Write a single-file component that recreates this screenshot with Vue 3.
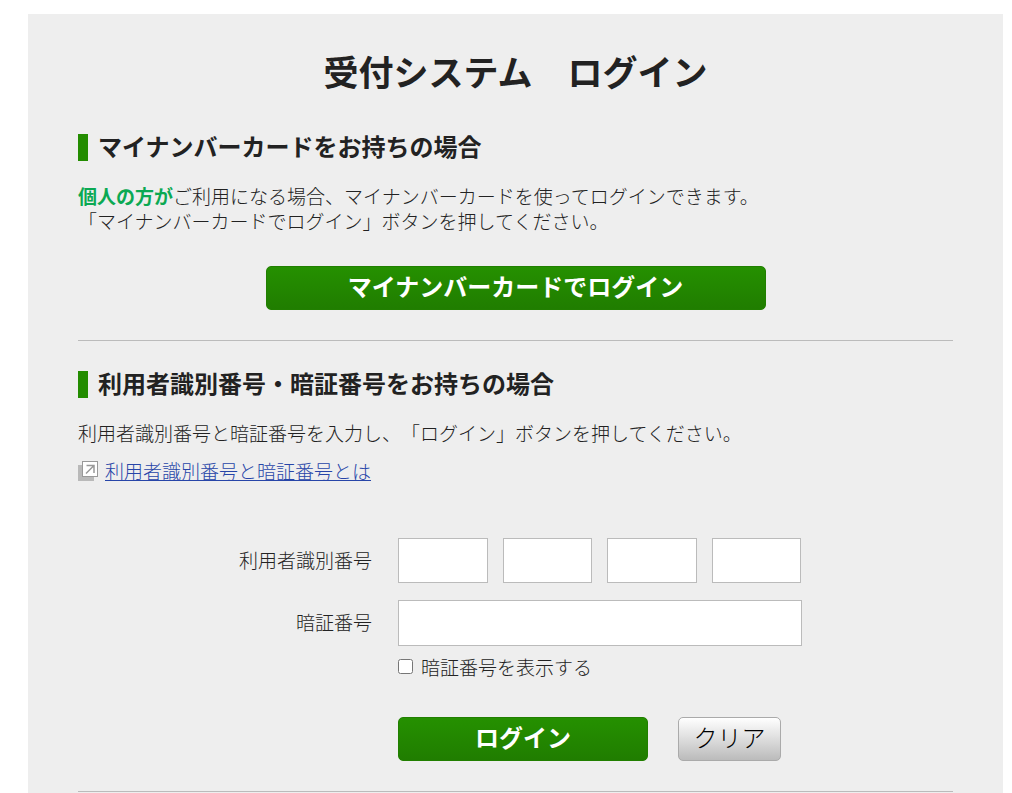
<script setup>
import { ref } from 'vue'

const userId = ref(['', '', '', ''])
const password = ref('')
const showPassword = ref(false)

function clearForm() {
  userId.value = ['', '', '', '']
  password.value = ''
  showPassword.value = false
}
</script>

<template>
  <div class="page">
    <main class="panel">
      <h1 class="title">受付システム　ログイン</h1>

      <section class="section">
        <h2 class="heading">マイナンバーカードをお持ちの場合</h2>
        <p class="text">
          <strong class="accent">個人の方が</strong>ご利用になる場合、マイナンバーカードを使ってログインできます。<br />「マイナンバーカードでログイン」ボタンを押してください。
        </p>
        <button type="button" class="btn btn-primary btn-card">マイナンバーカードでログイン</button>
      </section>

      <section class="section">
        <h2 class="heading">利用者識別番号・暗証番号をお持ちの場合</h2>
        <p class="text">利用者識別番号と暗証番号を入力し、「ログイン」ボタンを押してください。</p>
        <p class="help">
          <svg class="help-icon" viewBox="0 0 20 20" aria-hidden="true">
            <rect x="0" y="4" width="16" height="16" fill="#b9b9b9" />
            <rect x="4.500" y="0.500" width="15" height="15" fill="#fff" stroke="#999" />
            <path d="M8 12.500 15.500 5M8.500 4.500H16V12" fill="none" stroke="#999" stroke-width="1.500" />
          </svg>
          <a href="#about">利用者識別番号と暗証番号とは</a>
        </p>

        <form class="form" @submit.prevent>
          <label class="label" for="user-id-1">利用者識別番号</label>
          <div class="id-fields">
            <input
              v-for="n in 4"
              :id="`user-id-${n}`"
              :key="n"
              v-model="userId[n - 1]"
              class="field"
              type="text"
              maxlength="4"
              :aria-label="`利用者識別番号 ${n}`"
            />
          </div>

          <label class="label" for="password">暗証番号</label>
          <input
            id="password"
            v-model="password"
            class="field field-password"
            :type="showPassword ? 'text' : 'password'"
          />

          <label class="show">
            <input v-model="showPassword" class="check" type="checkbox" />
            暗証番号を表示する
          </label>

          <div class="actions">
            <button type="submit" class="btn btn-primary btn-login">ログイン</button>
            <button type="button" class="btn btn-clear" @click="clearForm">クリア</button>
          </div>
        </form>
      </section>
    </main>
  </div>
</template>

<style>
body {
  margin: 0;
  background: #fff;
}
</style>

<style scoped>
.page {
  box-sizing: border-box;
  display: flex;
  min-height: 100vh;
  padding: 14px 9px 0 28px;
  color: #222;
  font-family: "Noto Sans CJK JP", sans-serif;
  font-size: 19px;
  font-weight: 300;
  line-height: 25px;
  text-spacing-trim: space-all;
}

.panel {
  box-sizing: border-box;
  flex: 1;
  min-width: 0;
  padding: 33px 50px 1px;
  background: #eee;
}

.title {
  margin: 0 0 39px;
  font-size: 35px;
  font-weight: 700;
  line-height: 48px;
  text-align: center;
}

.section {
  padding-bottom: 30px;
  border-bottom: 1px solid #bbb;
}

.section + .section {
  padding-top: 30px;
}

.heading {
  margin: 0 0 22px;
  padding: 0 0 4px 10px;
  border-left: 10px solid #238c00;
  font-size: 24px;
  font-weight: 700;
  line-height: 23px;
}

.text {
  margin: 0;
}

.accent {
  color: #0ba953;
  font-weight: 700;
}

.btn {
  display: block;
  box-sizing: border-box;
  height: 44px;
  padding: 0 0 4px;
  border: 1px solid #217f00;
  border-radius: 5px;
  font-family: inherit;
  font-size: 24px;
  font-weight: 300;
  line-height: 38px;
  cursor: pointer;
}

.btn-primary {
  background: linear-gradient(#259000, #207d00);
  color: #fff;
  font-weight: 700;
}

.btn-card {
  width: 100%;
  max-width: 500px;
  margin: 33px auto 0;
}

.help {
  display: flex;
  align-items: center;
  gap: 7px;
  margin: 13px 0 55px;
}

.help-icon {
  flex: none;
  width: 20px;
  height: 20px;
}

.help a {
  color: #2745a8;
}

.form {
  display: grid;
  grid-template-columns: minmax(0, 294px) minmax(0, 404px);
  row-gap: 17px;
  column-gap: 26px;
}

.label {
  align-self: center;
  padding-bottom: 3px;
  text-align: right;
}

.id-fields {
  display: grid;
  grid-template-columns: repeat(4, minmax(0, 1fr));
  gap: 15px;
  padding-right: 1px;
}

.field {
  box-sizing: border-box;
  width: 100%;
  height: 45px;
  padding: 0 10px;
  border: 1px solid #bbb;
  border-radius: 0;
  background: #fff;
  font: inherit;
}

.field-password {
  height: 46px;
}

.show {
  display: flex;
  grid-column: 2;
  align-items: center;
  gap: 8px;
  margin-top: -9px;
}

.check {
  width: 15px;
  height: 15px;
  margin: 0;
}

.actions {
  display: flex;
  grid-column: 2;
  gap: 30px;
  margin-top: 21px;
}

.btn-login {
  width: 250px;
}

.btn-clear {
  width: 103px;
  border-color: #aaa;
  background: linear-gradient(#fff, #bbb);
  color: #000;
}
</style>
